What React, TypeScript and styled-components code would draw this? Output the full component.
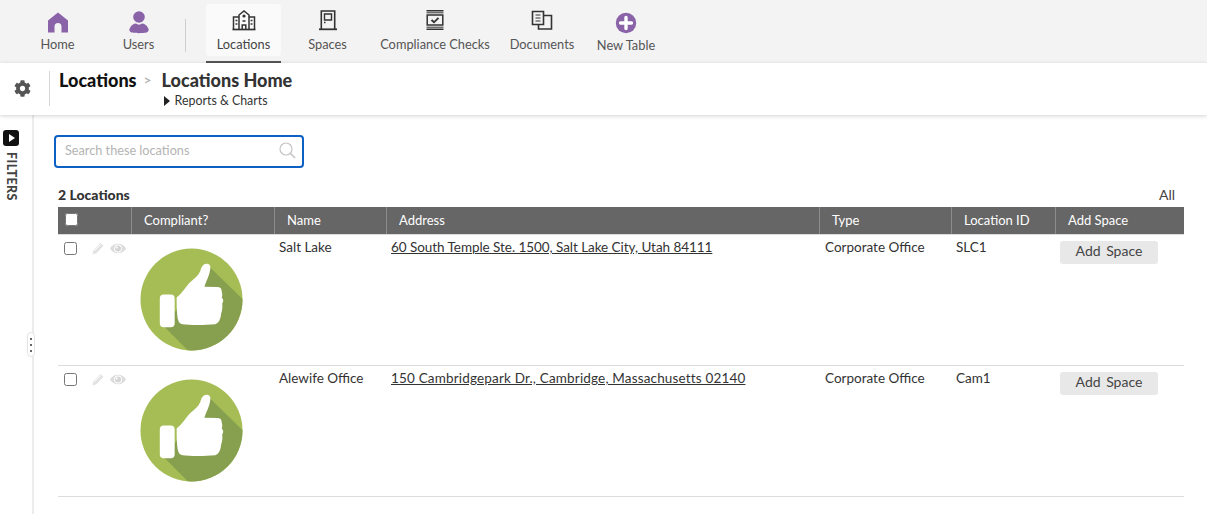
import React from 'react';
import styled, { createGlobalStyle } from 'styled-components';
import { FaCog } from 'react-icons/fa';

const GlobalStyle = createGlobalStyle`
    html, body {
        margin: 0;
        padding: 0;
        height: 514px;
        overflow: hidden;
        background: #fff;
        font-family: Lato, "Open Sans", sans-serif;
        color: #333;
    }
    * {
        box-sizing: border-box;
    }
`;

const Page = styled.div`
    width: 1207px;
    height: 514px;
    display: flex;
    flex-direction: column;
    overflow: hidden;
`;

/* top nav */
const NavBar = styled.nav`
    height: 63px;
    flex: none;
    background: #f3f3f3;
    display: flex;
    padding-left: 17px;
`;

const NavItem = styled.div<{ $w: number; $active?: boolean; $low?: boolean }>`
    width: ${(p) => p.$w}px;
    height: 63px;
    padding-top: ${(p) => (p.$low ? 11 : 10)}px;
    display: flex;
    flex-direction: column;
    align-items: center;
    font-size: 12.8px;
    color: #555;
    white-space: nowrap;
    position: relative;
    ${(p) => p.$active && `
        color: #444;
        &::before {
            content: "";
            position: absolute;
            inset: 4px 0 7px 0;
            background: #fafafa;
            border-radius: 4px;
        }
        &::after {
            content: "";
            position: absolute;
            left: 0;
            right: 0;
            bottom: 0;
            height: 2px;
            background: #555;
        }
    `}
`;

const NavIcon = styled.svg`
    width: 24px;
    height: 24px;
    display: block;
    position: relative;
    z-index: 1;
`;

const NavLabel = styled.span`
    margin-top: 2px;
    line-height: 16px;
    position: relative;
    z-index: 1;
`;

const NavDivider = styled.div`
    width: 1px;
    height: 33px;
    margin: 19px 20px 0 6px;
    background: #cfcfcf;
`;

/* title bar */
const TitleBar = styled.header`
    height: 52px;
    flex: none;
    display: flex;
    align-items: center;
    background: #fff;
    box-shadow: 0 1px 4px rgba(0, 0, 0, 0.18);
    position: relative;
    z-index: 2;
`;

const GearBox = styled.div`
    width: 49px;
    height: 35px;
    padding-left: 14px;
    display: flex;
    align-items: center;
    color: #555;
    font-size: 17px;
    margin-top: -2px;
`;

const Crumbs = styled.div`
    height: 35px;
    margin-top: -2px;
    border-left: 1px solid #d5d5d5;
    padding-left: 9px;
    display: grid;
    grid-template-columns: auto 25px auto;
    grid-template-rows: 19px 16px;
    row-gap: 3px;
`;

const CrumbRoot = styled.div`
    font-size: 18px;
    line-height: 19px;
    font-weight: 900;
    color: #111;
`;

const CrumbSep = styled.div`
    font-size: 14px;
    line-height: 17px;
    font-weight: 700;
    color: #b5b5b5;
    padding-left: 7px;
`;

const CrumbPage = styled(CrumbRoot)`
    color: #333;
`;

const ReportsLink = styled.div`
    grid-column: 3;
    padding-left: 2px;
    display: flex;
    align-items: center;
    gap: 5px;
    font-size: 12.4px;
    color: #333;
`;

const Caret = styled.span`
    width: 0;
    height: 0;
    border-left: 6px solid #222;
    border-top: 5px solid transparent;
    border-bottom: 5px solid transparent;
`;

/* body */
const Body = styled.div`
    flex: 1;
    display: flex;
    min-height: 0;
`;

const SideRail = styled.aside`
    width: 34px;
    flex: none;
    border-right: 2px solid #ececec;
    padding: 15px 0 0 3px;
    position: relative;
    display: flex;
    flex-direction: column;
`;

const FilterToggle = styled.div`
    width: 16px;
    height: 16px;
    border-radius: 3px;
    background: #111;
    display: flex;
    align-items: center;
    justify-content: center;
    &::after {
        content: "";
        margin-left: 2px;
        border-left: 6px solid #fff;
        border-top: 4px solid transparent;
        border-bottom: 4px solid transparent;
    }
`;

const FilterLabel = styled.div`
    writing-mode: vertical-rl;
    align-self: flex-start;
    font-size: 12.5px;
    line-height: 16px;
    font-weight: 900;
    letter-spacing: 0.4px;
    color: #444;
    margin-top: 6px;
`;

const Grip = styled.div`
    position: absolute;
    right: -3px;
    top: 217px;
    width: 8px;
    height: 25px;
    border: 1px solid #e4e4e4;
    border-radius: 4px;
    background: #fff;
    display: flex;
    flex-direction: column;
    align-items: center;
    justify-content: center;
    gap: 4px;
`;

const GripDot = styled.span`
    width: 2px;
    height: 2px;
    background: #666;
`;

const Main = styled.main`
    flex: 1;
    padding: 20px 23px 0 24px;
    min-width: 0;
`;

const SearchBox = styled.div`
    width: 250px;
    height: 33px;
    margin-left: -4px;
    border: 2px solid #0d60c4;
    border-radius: 4px;
    display: flex;
    align-items: center;
    justify-content: space-between;
    padding: 0 6px 3px 9px;
    font-size: 12.7px;
    color: #b4b4b4;
`;

const CountRow = styled.div`
    display: flex;
    justify-content: space-between;
    align-items: flex-end;
    height: 18px;
    margin-top: 18px;
    margin-bottom: 3px;
    font-size: 14px;
    line-height: 18px;
`;

const CountLabel = styled.strong`
    font-weight: 900;
    color: #333;
`;

const AllLink = styled.span`
    color: #444;
    padding-right: 9px;
`;

const Table = styled.table`
    width: 1126px;
    border-collapse: separate;
    border-spacing: 0;
    table-layout: fixed;
    font-size: 13.5px;
`;

const HeadCell = styled.th<{ $w: number }>`
    width: ${(p) => p.$w}px;
    height: 27px;
    padding: 0 0 2px 12px;
    background: #666;
    color: #fff;
    font-size: 13px;
    font-weight: 400;
    text-align: left;
    border-left: 1px solid #8c8c8c;
    &:first-child {
        border-left: 0;
    }
`;

const Row = styled.tr`
    height: 131px;
    &:last-child {
        height: 132px;
    }
    &:last-child td {
        border-bottom: 1px solid #dcdcdc;
    }
`;

const Cell = styled.td<{ $pl?: number }>`
    vertical-align: top;
    border-top: 1px solid #dcdcdc;
    padding: 4px 0 0 ${(p) => p.$pl ?? 5}px;
    line-height: 16px;
    color: #333;
    white-space: nowrap;
`;

const Check = styled.input.attrs({ type: 'checkbox' })`
    width: 13px;
    height: 13px;
    margin: 0;
    display: block;
`;

const HeadCheck = styled(Check)`
    margin-left: -5px;
`;

const RowTools = styled.div`
    display: flex;
    align-items: center;
    padding: 3px 0 0 0;
    gap: 6px;
`;

const RowCheck = styled(Check)`
    margin-right: 9px;
    margin-left: -0.5px;
`;

const AddressLink = styled.span<{ $track: number }>`
    text-decoration: underline;
    color: #333;
    letter-spacing: ${(p) => p.$track}px;
`;

const AddButton = styled.div`
    width: 98px;
    height: 23px;
    margin-top: 2px;
    padding-bottom: 3px;
    background: #e8e8e8;
    border-radius: 3px;
    display: flex;
    align-items: center;
    justify-content: center;
    color: #444;
    word-spacing: 2px;
    font-size: 14px;
`;

const ThumbSvg = styled.svg`
    display: block;
    width: 103px;
    height: 103px;
    margin: 9px 0 0 9px;
`;

const HomeIcon = () => (
    <NavIcon viewBox="0 0 24 24">
        <path d="M12 2.5 22 10.5V22.5H15.5V16.5A3.5 3.5 0 0 0 8.5 16.5V22.5H2V10.5Z" fill="#8a62a8" />
    </NavIcon>
);

const UsersIcon = () => (
    <NavIcon viewBox="0 0 24 24">
        <circle cx="12" cy="7" r="5.8" fill="#8a62a8" />
        <path d="M3.5 22A3 3 0 0 1 3 18C4 15 7 13.5 9 13.5C10.5 15 13.5 15 15 13.5C17 13.5 20 15 21 18A3 3 0 0 1 20.5 22C19 23.5 5 23.5 3.5 22Z" fill="#8a62a8" />
    </NavIcon>
);

const BuildingIcon = () => (
    <NavIcon viewBox="0 0 24 24" fill="none" stroke="#333" strokeWidth="1.5">
        <path d="M.5 19.5H23.5" strokeWidth="1.7" />
        <path d="M1.5 19.5V7H7M22.5 19.5V7H17" />
        <path d="M7 19.5V5L12 1L17 5V19.5" />
        <circle cx="12" cy="6" r="1.6" fill="#333" stroke="none" />
        <path d="M10.2 19.5V15H13.8V19.5M10.5 11H13.5M3.5 10.5H5.4M3.5 14H5.4M18.6 10.5H20.5M18.6 14H20.5" strokeWidth="1.5" />
    </NavIcon>
);

const DoorIcon = () => (
    <NavIcon viewBox="0 0 24 24" fill="none" stroke="#333" strokeWidth="1.6">
        <path d="M5.3 19V1H18.7V19" />
        <path d="M8.5 4H15.5V10H8.5Z" strokeWidth="1.4" />
        <path d="M3 19.3H21" strokeWidth="1.8" />
        <path d="M8 12.5H9.5" strokeWidth="1.4" />
    </NavIcon>
);

const ChecksIcon = () => (
    <NavIcon viewBox="0 0 24 24" fill="none" stroke="#333">
        <path d="M3.5 .8H20.5M3.5 19.2H20.5" strokeWidth="1.6" />
        <path d="M3.5 2.8H20.5M3.5 17.2H20.5" strokeWidth="1" />
        <path d="M4.2 5H19.8V15H4.2Z" strokeWidth="1.5" />
        <path d="M8.5 10 11 12.3 15.5 7.8" strokeWidth="1.9" />
    </NavIcon>
);

const DocsIcon = () => (
    <NavIcon viewBox="0 0 24 24" fill="none" stroke="#333" strokeWidth="1.6">
        <path d="M2.5 1.5H13.5V14.5H2.5Z" />
        <path d="M13.5 5.5H21.5V19H8.5V14.5" />
        <path d="M5.5 5H10.5M5.5 8H10.5M5.5 11H10.5" strokeWidth="1.2" />
    </NavIcon>
);

const PlusIcon = () => (
    <NavIcon viewBox="0 0 24 24">
        <circle cx="12" cy="12" r="10.2" fill="#8a62a8" />
        <path d="M12 6.5V17.5M6.5 12H17.5" stroke="#fff" strokeWidth="3.4" strokeLinecap="round" />
    </NavIcon>
);

const SearchIcon = () => (
    <svg width="17" height="17" viewBox="0 0 17 17" fill="none" stroke="#c4c4c4" strokeWidth="1.2">
        <circle cx="7" cy="7" r="6" />
        <path d="M11.5 11.5 16 16" strokeWidth="1.6" />
    </svg>
);

const PencilIcon = () => (
    <svg width="12" height="13" viewBox="0 0 12 13">
        <path d="M.6 12.4 1.4 8.4 8.4 1 11.4 3.8 4.4 11.2Z" fill="#e2e2e2" />
        <path d="M2.4 8.6 8.6 2.4" stroke="#fff" strokeWidth="1" />
    </svg>
);

const EyeIcon = () => (
    <svg width="16" height="11" viewBox="0 0 16 11">
        <path d="M0 5.5C3 -.8 13 -.8 16 5.5C13 11.8 3 11.8 0 5.5Z" fill="#dcdcdc" />
        <circle cx="8" cy="5.5" r="3.9" fill="#fff" />
        <circle cx="8" cy="5.5" r="3" fill="#d4d4d4" />
        <circle cx="6.8" cy="4.4" r="1" fill="#fff" />
    </svg>
);

const ThumbBadge = ({ id }: { id: string }) => (
    <ThumbSvg viewBox="0 0 104 104">
        <clipPath id={id}>
            <circle cx="52" cy="52" r="51.5" />
        </clipPath>
        <circle cx="52" cy="52" r="51.5" fill="#a5bd54" />
        <path d="M71 20 104 52V104H49L25 80 45 50Z" fill="#87a04f" clipPath={`url(#${id})`} />
        <rect x="20" y="47" width="15" height="33" rx="4" fill="#fff" />
        <path
            d="M37 50C42 46 46 40 50 35C55 31 59 28 61 23C62 19 64 16 67 16C70 16 71.5 18 71 21C70.5 27 67 33 65 39L78 39.5C81 39.5 82.5 41 82.5 44C83 46 83.5 48 82.5 50C84.5 52 84.5 54 83 56C83.5 60 83 63 82 66C81.5 71 80 76 76 77C65 78 50 78 43 77C40 76.5 39 75 38 71C37 64 37 57 37 50Z"
            fill="#fff"
        />
    </ThumbSvg>
);

const columns = [
    { title: '', w: 73 },
    { title: 'Compliant?', w: 143 },
    { title: 'Name', w: 112 },
    { title: 'Address', w: 433 },
    { title: 'Type', w: 132 },
    { title: 'Location ID', w: 104 },
    { title: 'Add Space', w: 129 },
];

const locations = [
    { name: 'Salt Lake', address: '60 South Temple Ste. 1500, Salt Lake City, Utah 84111', id: 'SLC1', track: -0.05 },
    { name: 'Alewife Office', address: '150 Cambridgepark Dr., Cambridge, Massachusetts 02140', id: 'Cam1', track: 0.17 },
];

const App = () => {
    return (
        <Page>
            <GlobalStyle />
            <NavBar>
                <NavItem $w={81}><HomeIcon /><NavLabel>Home</NavLabel></NavItem>
                <NavItem $w={81}><UsersIcon /><NavLabel>Users</NavLabel></NavItem>
                <NavDivider />
                <NavItem $w={75} $active><BuildingIcon /><NavLabel>Locations</NavLabel></NavItem>
                <NavItem $w={93}><DoorIcon /><NavLabel>Spaces</NavLabel></NavItem>
                <NavItem $w={122}><ChecksIcon /><NavLabel>Compliance Checks</NavLabel></NavItem>
                <NavItem $w={92}><DocsIcon /><NavLabel>Documents</NavLabel></NavItem>
                <NavItem $w={76} $low><PlusIcon /><NavLabel>New Table</NavLabel></NavItem>
            </NavBar>
            <TitleBar>
                <GearBox><FaCog /></GearBox>
                <Crumbs>
                    <CrumbRoot>Locations</CrumbRoot>
                    <CrumbSep>&gt;</CrumbSep>
                    <CrumbPage>Locations Home</CrumbPage>
                    <ReportsLink><Caret />Reports &amp; Charts</ReportsLink>
                </Crumbs>
            </TitleBar>
            <Body>
                <SideRail>
                    <FilterToggle />
                    <FilterLabel>FILTERS</FilterLabel>
                    <Grip><GripDot /><GripDot /><GripDot /></Grip>
                </SideRail>
                <Main>
                    <SearchBox>
                        Search these locations
                        <SearchIcon />
                    </SearchBox>
                    <CountRow>
                        <CountLabel>2 Locations</CountLabel>
                        <AllLink>All</AllLink>
                    </CountRow>
                    <Table>
                        <thead>
                            <tr>
                                {columns.map((c, i) => (
                                    <HeadCell key={i} $w={c.w}>
                                        {i === 0 ? <HeadCheck /> : c.title}
                                    </HeadCell>
                                ))}
                            </tr>
                        </thead>
                        <tbody>
                            {locations.map((loc) => (
                                <Row key={loc.id}>
                                    <Cell $pl={6}>
                                        <RowTools>
                                            <RowCheck />
                                            <PencilIcon />
                                            <EyeIcon />
                                        </RowTools>
                                    </Cell>
                                    <Cell $pl={0}><ThumbBadge id={`clip-${loc.id}`} /></Cell>
                                    <Cell>{loc.name}</Cell>
                                    <Cell><AddressLink $track={loc.track}>{loc.address}</AddressLink></Cell>
                                    <Cell $pl={6}>Corporate Office</Cell>
                                    <Cell>{loc.id}</Cell>
                                    <Cell><AddButton>Add Space</AddButton></Cell>
                                </Row>
                            ))}
                        </tbody>
                    </Table>
                </Main>
            </Body>
        </Page>
    );
};

export default App;
